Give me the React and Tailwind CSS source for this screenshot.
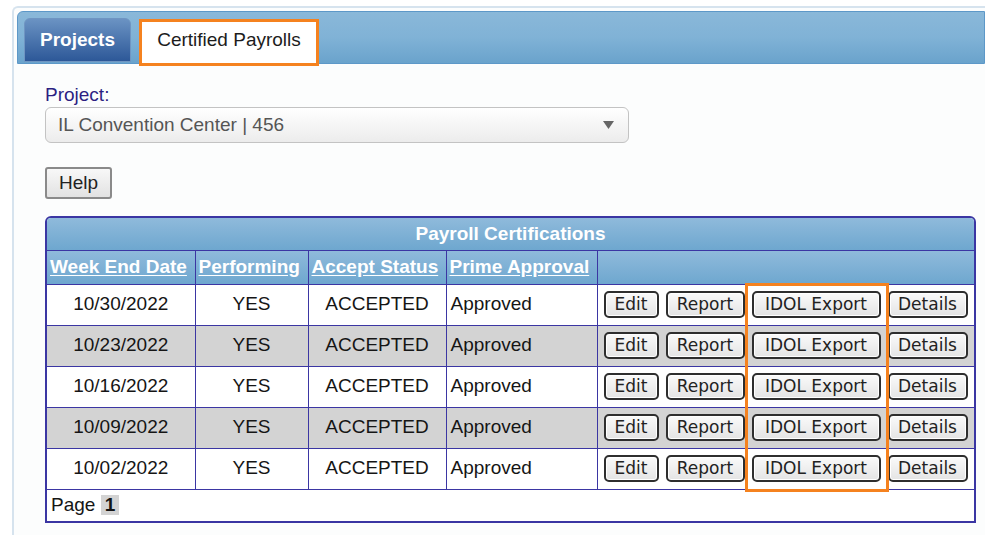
const rows = ['10/30/2022', '10/23/2022', '10/16/2022', '10/09/2022', '10/02/2022'];

const ActionButton = ({ children, w }) => (
  <button className={`${w} h-[27px] border-2 border-[#2e2e2e] rounded-[5px] bg-gradient-to-b from-[#fafafa] to-[#e4e4e4] text-[17px] leading-none text-[#222] font-['DejaVu_Sans',sans-serif] shadow-[inset_0_0_0_1px_#fff]`}>
    {children}
  </button>
);

export default function App() {
  return (
    <div className="w-[985px] h-[535px] bg-white font-['Liberation_Sans',Arial,sans-serif] overflow-hidden">
      <div className="ml-[12px] mt-[6px] h-[540px] border-l-2 border-t-2 border-[#d6e3ee] rounded-tl-md bg-[#fcfdfd] pt-[3px] pl-[3px]">
        {/* Tab strip */}
        <div className="h-[53px] rounded-tl-md border border-[#5d98c8] bg-gradient-to-b from-[#8ab8d9] via-[#80b2d6] to-[#6aa3cc] flex items-end gap-[8px] pl-[6px]">
          <div className="w-[107px] h-[44px] mb-[1px] rounded-t-md border border-[#6f95c2] bg-gradient-to-b from-[#6b93c3] to-[#2d5898] flex items-center justify-center text-white font-bold text-[19px]">
            Projects
          </div>
          <div className="w-[180px] h-[47px] -mb-[3px] border-[3px] border-[#f5821f] bg-white flex items-center justify-center text-[19px] text-[#1c1c1c] pb-[4px]">
            Certified Payrolls
          </div>
        </div>

        <div className="pl-[28px] pt-[20px]">
          <div className="text-[19px] leading-[22px] text-[#2d1f82]">Project:</div>
          <div className="mt-[1px] w-[584px] h-[36px] rounded-md border border-[#c3c3c3] bg-gradient-to-b from-white to-[#ececec] flex items-center justify-between pl-[12px] pr-[14px] text-[19px] text-[#555]">
            <span>IL Convention Center | 456</span>
            <svg width="11" height="8" viewBox="0 0 11 8"><path d="M0 0h11L5.5 8z" fill="#666" /></svg>
          </div>

          <button className="mt-[24px] w-[67px] h-[32px] border-2 border-[#8a8a8a] rounded-[3px] bg-gradient-to-b from-[#f8f8f8] to-[#e2e2e2] text-[19px] text-[#222]">
            Help
          </button>

          {/* Payroll table */}
          <div className="relative mt-[17px] w-[931px] border-2 border-[#3b36a3] rounded-t-md">
            <div className="h-[33px] rounded-t-[4px] bg-gradient-to-b from-[#8fbadb] to-[#6ea7cf] border-b border-[#3b36a3] flex items-center justify-center text-white font-bold text-[19px]">
              Payroll Certifications
            </div>
            <table className="w-full border-collapse border-hidden text-[19px] text-[#151515]">
              <colgroup>
                <col className="w-[148px]" />
                <col className="w-[113px]" />
                <col className="w-[138px]" />
                <col className="w-[151px]" />
                <col />
              </colgroup>
              <thead>
                <tr className="h-[33px] bg-gradient-to-b from-[#8fbadb] to-[#6ea7cf]">
                  {['Week End Date', 'Performing', 'Accept Status', 'Prime Approval'].map((h) => (
                    <th key={h} className="border border-[#3b36a3] px-[3px] text-left font-bold text-white underline underline-offset-2 whitespace-nowrap">
                      {h}
                    </th>
                  ))}
                  <th className="border border-[#3b36a3]"></th>
                </tr>
              </thead>
              <tbody>
                {rows.map((d, i) => (
                  <tr key={d} className={`h-[41px] ${i % 2 ? 'bg-[#d3d3d3]' : 'bg-white'}`}>
                    <td className="border border-[#3b36a3] text-center">{d}</td>
                    <td className="border border-[#3b36a3] text-center">YES</td>
                    <td className="border border-[#3b36a3] text-center">ACCEPTED</td>
                    <td className="border border-[#3b36a3] px-[4px]">Approved</td>
                    <td className="border border-[#3b36a3] pl-[6px]">
                      <div className="flex gap-[7px]">
                        <ActionButton w="w-[55px]">Edit</ActionButton>
                        <ActionButton w="w-[79px]">Report</ActionButton>
                        <ActionButton w="w-[129px]">IDOL Export</ActionButton>
                        <ActionButton w="w-[80px]">Details</ActionButton>
                      </div>
                    </td>
                  </tr>
                ))}
                <tr className="h-[32px] bg-white">
                  <td colSpan={5} className="border border-[#3b36a3] px-[4px]">
                    Page <span className="inline-block bg-[#d3d3d3] px-[4px] font-bold leading-[20px]">1</span>
                  </td>
                </tr>
              </tbody>
            </table>
            {/* highlight around the IDOL Export column */}
            <div className="absolute left-[698px] top-[65px] w-[144px] h-[209px] border-[3px] border-[#f5821f] pointer-events-none"></div>
          </div>
        </div>
      </div>
    </div>
  );
}
